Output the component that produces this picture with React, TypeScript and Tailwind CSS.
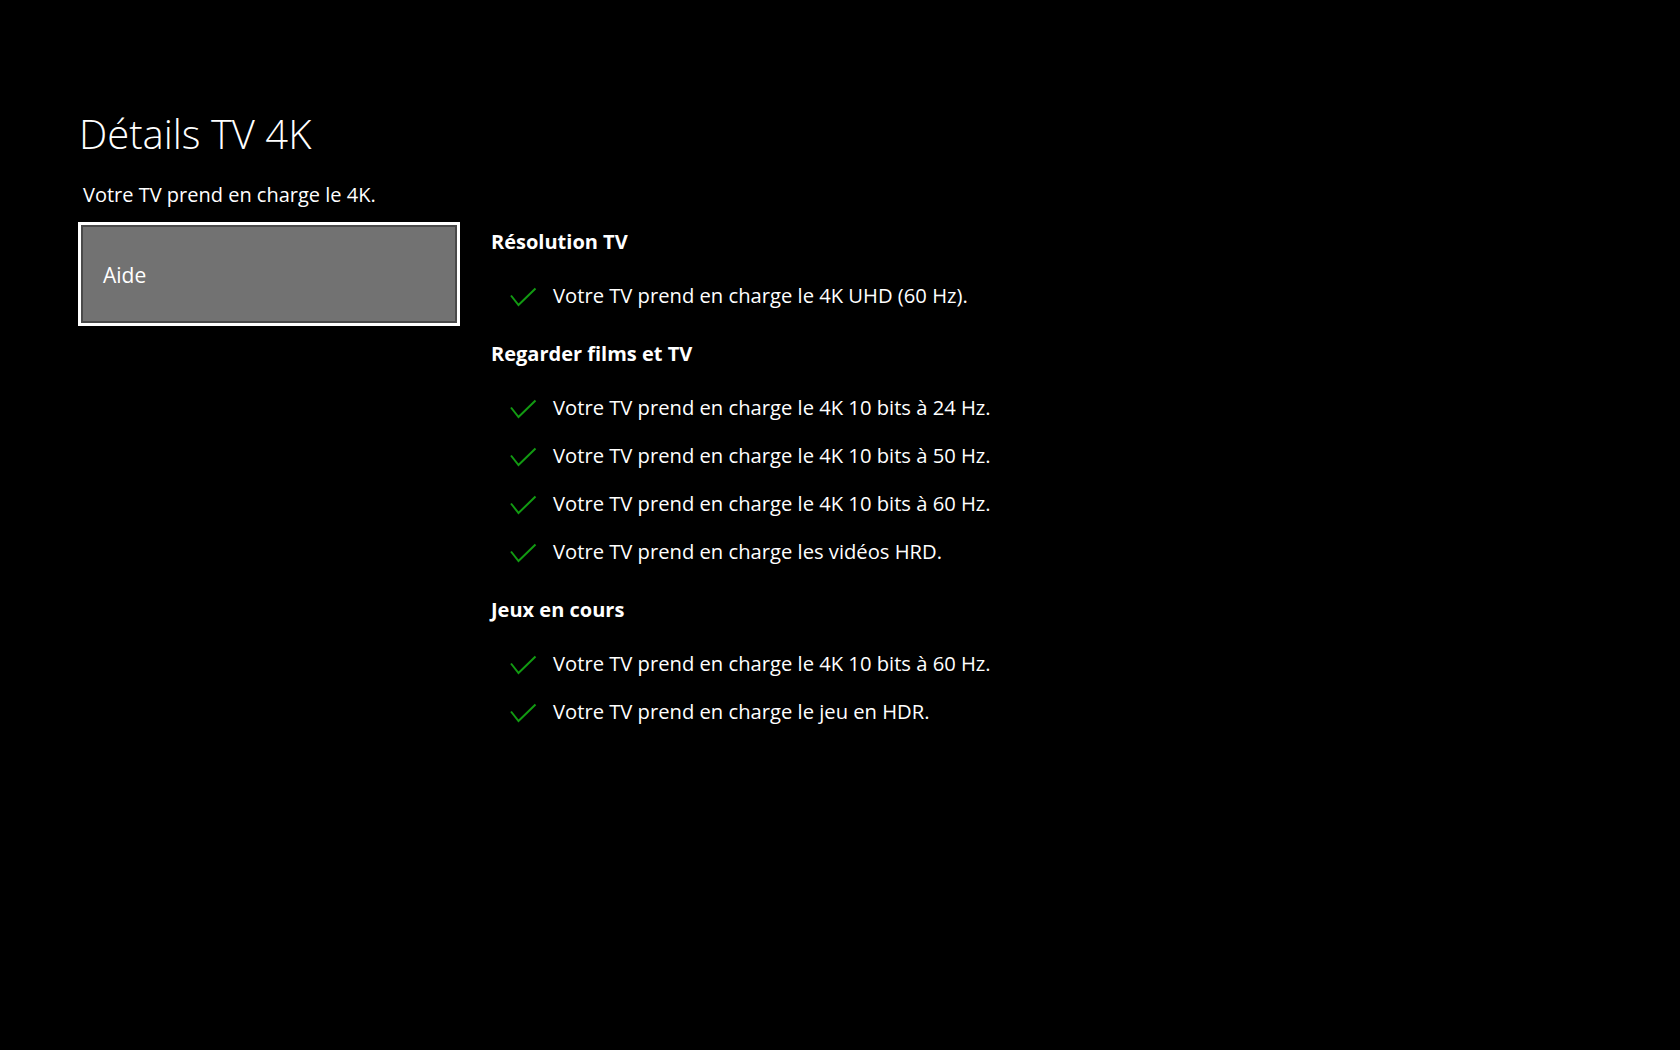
const sections = [
  {
    title: 'Résolution TV',
    items: ['Votre TV prend en charge le 4K UHD (60 Hz).'],
  },
  {
    title: 'Regarder films et TV',
    items: [
      'Votre TV prend en charge le 4K 10 bits à 24 Hz.',
      'Votre TV prend en charge le 4K 10 bits à 50 Hz.',
      'Votre TV prend en charge le 4K 10 bits à 60 Hz.',
      'Votre TV prend en charge les vidéos HRD.',
    ],
  },
  {
    title: 'Jeux en cours',
    items: [
      'Votre TV prend en charge le 4K 10 bits à 60 Hz.',
      'Votre TV prend en charge le jeu en HDR.',
    ],
  },
];

function Check() {
  return (
    <svg width="28" height="22" viewBox="0 0 28 22" className="shrink-0 mt-[4px]">
      <path d="M2 9.5 L9.5 19 L26.5 2.5" fill="none" stroke="#129a12" strokeWidth="2" />
    </svg>
  );
}

export default function App() {
  return (
    <div
      className="min-h-screen w-full bg-black text-white pl-[78px] pt-[106px]"
      style={{ fontFamily: '"Open Sans", "Noto Sans", sans-serif' }}
    >
      <h1 className="text-[40px] leading-[56px] font-light pl-[1px]">Détails TV 4K</h1>
      <p className="mt-[19px] text-[20px] leading-[28px] pl-[5px]">Votre TV prend en charge le 4K.</p>

      <div className="mt-[13px] flex gap-[31px]">
        {/* Left: focused tile */}
        <div className="w-[382px] h-[104px] border-[3px] border-white shrink-0">
          <div className="h-full border-2 border-[#4a4a4a] bg-[#727272] flex items-center pl-[20px] pt-[1px]">
            <span className="text-[21px] leading-[28px]">Aide</span>
          </div>
        </div>

        {/* Right: details */}
        <div className="flex flex-col pt-[6px]">
          {sections.map((s, i) => (
            <div key={s.title} className={i > 0 ? 'mt-[21px]' : ''}>
              <h2 className="text-[20px] leading-[28px] font-bold">{s.title}</h2>
              <div className="mt-[15px] flex flex-col">
                {s.items.map((item, j) => (
                  <div key={j} className="h-[48px] flex items-center pl-[18px] gap-[16px]">
                    <Check />
                    <span className="text-[20.2px] leading-[28px]">{item}</span>
                  </div>
                ))}
              </div>
            </div>
          ))}
        </div>
      </div>
    </div>
  );
}
